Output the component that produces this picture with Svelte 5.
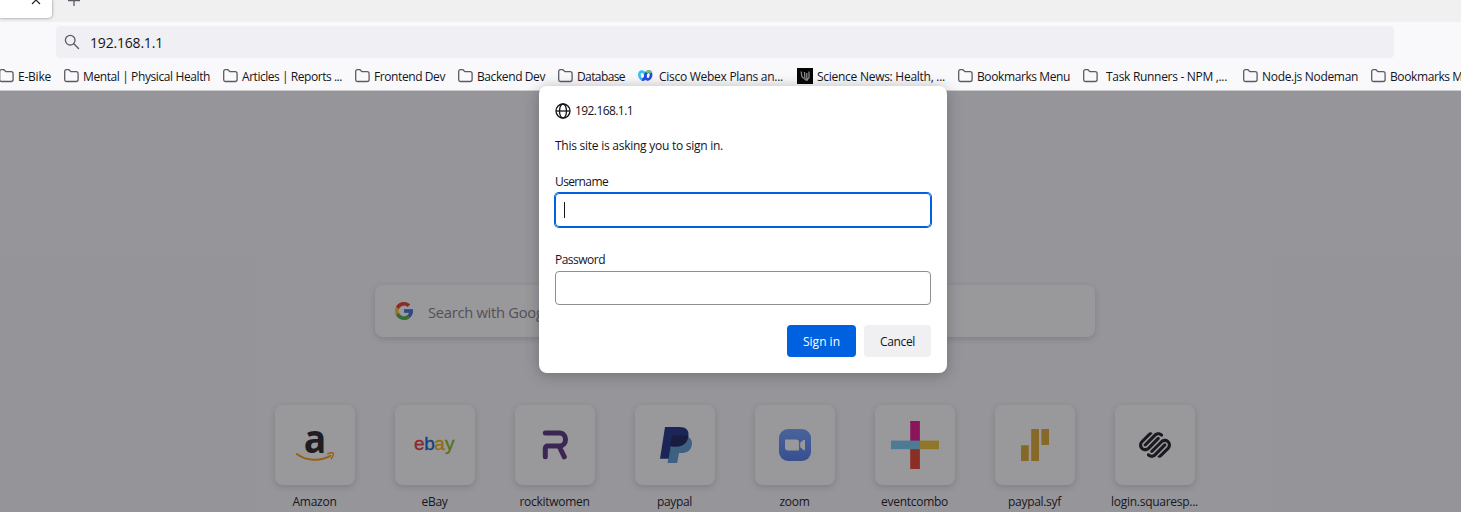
<script>
  const bookmarks = [
    { text: 'E-Bike', w: 33 },
    { text: 'Mental | Physical Health', w: 127 },
    { text: 'Articles | Reports ...', w: 100 },
    { text: 'Frontend Dev', w: 71 },
    { text: 'Backend Dev', w: 68 },
    { text: 'Database', w: 48 },
    { text: 'Cisco Webex Plans an...', w: 124, icon: 'webex', inner: 6 },
    { text: 'Science News: Health, ...', w: 128, icon: 'science', before: 1 },
    { text: 'Bookmarks Menu', w: 93 },
    { text: 'Task Runners - NPM ,...', w: 121, inner: 8 },
    { text: 'Node.js Nodeman', w: 96, before: 3 },
    { text: 'Bookmarks Menu', w: 93 }
  ];

  const sites = [
    { name: 'Amazon', icon: 'amazon', w: 44 },
    { name: 'eBay', icon: 'ebay', w: 26 },
    { name: 'rockitwomen', icon: 'rockit', w: 70 },
    { name: 'paypal', icon: 'paypal', w: 35 },
    { name: 'zoom', icon: 'zoom', w: 30 },
    { name: 'eventcombo', icon: 'event', w: 67 },
    { name: 'paypal.syf', icon: 'syf', w: 53 },
    { name: 'login.squaresp...', icon: 'square', w: 87 }
  ];

  // Tightens tracking so a label occupies the given width.
  function fit(node, width) {
    const natural = node.getBoundingClientRect().width;
    node.style.letterSpacing = (width - natural) / node.textContent.length + 'px';
  }
</script>

{#snippet siteIcon(kind)}
  <svg width="80" height="80" viewBox="0 0 80 80">
    {#if kind === 'amazon'}
      <text x="28.8" y="48" class="amazon-a" textLength="22.5" lengthAdjust="spacingAndGlyphs">a</text>
      <path d="M21.8 49C31 56 45 56.600 55.300 50.800" fill="none" stroke="#ff9900" stroke-width="2" stroke-linecap="round" />
      <path d="M52.800 48.900c2-1 4.500-1.200 5.400-.7.3 1.800-.6 4-2 5.600" fill="none" stroke="#ff9900" stroke-width="1.400" stroke-linecap="round" stroke-linejoin="round" />
    {:else if kind === 'ebay'}
      <text y="44.500" class="ebay"><tspan x="19" fill="#e53238" stroke="#e53238">e</tspan><tspan x="29.300" fill="#0064d2" stroke="#0064d2">b</tspan><tspan x="39.300" fill="#f5af02" stroke="#f5af02">a</tspan><tspan x="49.900" fill="#86b817" stroke="#86b817">y</tspan></text>
    {:else if kind === 'rockit'}
      <path d="M30.300 28H44.500C52.500 28 52.500 41 44.500 41H33Q30.300 41 30.300 44V51.800M44 41L49.300 51.800" fill="none" stroke="#56307c" stroke-width="5" stroke-linecap="round" stroke-linejoin="round" />
    {:else if kind === 'paypal'}
      <path d="M52.300 31.500c4.200 1.800 5.400 5.400 4.400 9.200-1.300 5-4.800 7.300-10.200 7.300H44l-1.800 10h-9.700l2.700-15z" fill="#5a9bd2" />
      <path d="M30 22h14.500c6.500 0 10 3.300 8.800 9.300-1.200 6.700-5.500 10.200-12.500 10.200h-5L33.600 53.800H25z" fill="#1c2f86" />
      <path d="M37.200 30.500h14c1.100 0 1.900.4 2.200.9-1.300 6.700-5.500 10.200-12.500 10.200h-5.700z" fill="#141f5a" />
    {:else if kind === 'zoom'}
      <defs><linearGradient id="zg" x2="0" y2="1"><stop stop-color="#719fff" /><stop offset="1" stop-color="#4f7bea" /></linearGradient></defs>
      <rect x="24" y="24" width="32" height="32" rx="9" fill="url(#zg)" />
      <path d="M30 34.500h11q3 0 3 3v8h-11q-3 0-3-3zM45.200 37.800l3.300-2.700q1.500-1 1.500.5v8.800q0 1.500-1.500.5l-3.300-2.700z" fill="#fff" />
    {:else if kind === 'event'}
      <path fill="#e5118b" d="M35.200 16h9.700v20h-9.700z" />
      <path fill="#e5402a" d="M35.200 44h9.700v20h-9.700z" />
      <path fill="#edc234" d="M45 35.600h19v8.600H45z" />
      <path fill="#76c9f3" d="M16 35.600h29v8.600H16z" />
    {:else if kind === 'syf'}
      <path fill="#dca82e" d="M26 40.300h7.700V56H26zM36.200 24H44v32h-7.800zM46.400 24H54v16h-7.600z" />
    {:else}
      <path transform="translate(24 24) scale(1.3333)" fill="#1b1b1f" d="M22.655 8.719c-1.802-1.801-4.726-1.801-6.564 0l-7.351 7.350c-.45.45-.45 1.200 0 1.650.45.449 1.200.449 1.650 0l7.351-7.351c.899-.899 2.362-.899 3.264 0 .9.9.9 2.364 0 3.264l-7.239 7.239c.9.899 2.362.899 3.263 0l5.589-5.589c1.836-1.838 1.836-4.763.037-6.563zm-2.475 2.437c-.451-.45-1.201-.45-1.650 0l-7.354 7.389c-.9.899-2.361.899-3.262 0-.45-.45-1.200-.45-1.650 0s-.45 1.200 0 1.649c1.801 1.801 4.726 1.801 6.564 0l7.351-7.350c.449-.487.449-1.239.001-1.688zm-2.439-7.350c-1.801-1.801-4.726-1.801-6.564 0l-7.351 7.351c-.45.449-.45 1.199 0 1.649s1.200.45 1.650 0l7.395-7.351c.9-.899 2.371-.899 3.270 0 .451.45 1.201.45 1.650 0 .421-.487.421-1.199-.05-1.649zm-2.475 2.475c-.45-.449-1.200-.449-1.650 0l-7.351 7.351c-.899.9-2.362.9-3.263 0-.899-.9-.9-2.364 0-3.264l7.239-7.239c-.9-.9-2.362-.9-3.263 0L1.390 8.719c-1.801 1.800-1.801 4.725 0 6.563 1.801 1.801 4.725 1.801 6.564 0l7.350-7.351c.451-.488.451-1.238-.038-1.650z" />
    {/if}
  </svg>
{/snippet}

<div class="browser">
  <header>
    <div class="tabs">
      <div class="tab">
        <svg width="12" height="12" viewBox="0 0 12 12"><path d="M2 2l8 8M10 2l-8 8" stroke="#222127" stroke-width="1.200" /></svg>
      </div>
      <svg class="plus" width="14" height="14" viewBox="0 0 14 14"><path d="M7 1v12M1 7.500h12" stroke="#5b5b66" stroke-width="1.300" fill="none" /></svg>
    </div>
    <div class="toolbar">
      <div class="url">
        <svg width="16" height="16" viewBox="0 0 16 16"><circle cx="6.200" cy="6.200" r="4.800" fill="none" stroke="#5b5b66" stroke-width="1.300" /><path d="M9.800 9.800l4.700 4.700" stroke="#5b5b66" stroke-width="1.400" stroke-linecap="round" /></svg>
        <span use:fit={73}>192.168.1.1</span>
      </div>
    </div>
    <nav>
      {#each bookmarks as b}
        <div class="bookmark" style="margin-left:{b.before ?? 0}px">
          {#if b.icon === 'webex'}
            <svg width="15" height="14" viewBox="0 0 15 14"><g fill="none" stroke-width="2.700"><ellipse cx="4.400" cy="6.500" rx="2.900" ry="4" stroke="#38bdf0" transform="rotate(-15 4.400 6.500)" /><ellipse cx="10.200" cy="6.500" rx="2.800" ry="4" stroke="#2748db" transform="rotate(15 10.200 6.500)" /><path d="M8.300 3.500C9.600 1.800 12 1.700 13 4" stroke="#68cc60" /><path d="M4 10.500C6 11 7 9 7.500 6.500" stroke="#244de0" /></g></svg>
          {:else if b.icon === 'science'}
            <svg width="16" height="16" viewBox="0 0 16 16"><path fill="#050505" d="M0 0h16v16H0z" /><path d="M4.200 3.500l.6 5 2 2M7.500 4l.5 7.500 1.800.8V5M12 3.500v6l-2 2.500" fill="none" stroke="#8a8a8a" stroke-width="1.300" /></svg>
          {:else}
            <svg width="15" height="14" viewBox="0 0 15 14"><path d="M2.500.7h2.400l2 1.900h5.200q2 0 2 2v5.900q0 2-2 2H2.700q-2 0-2-2v-8q0-1.800 1.800-1.800z" fill="none" stroke="#5b5b66" stroke-width="1.300" /></svg>
          {/if}
          <span use:fit={b.w} style="margin-left:{b.inner ?? 4}px">{b.text}</span>
        </div>
      {/each}
    </nav>
  </header>

  <main>
    <div class="search">
      <svg width="18" height="18" viewBox="4 4 40 40"><path fill="#fbc02d" d="M43.600 20H24v8h11.300C33.700 32.700 29.200 36 24 36c-6.600 0-12-5.400-12-12s5.400-12 12-12c3 0 5.800 1.200 8 3l5.600-5.600C34 6 29.300 4 24 4 13 4 4 13 4 24s9 20 20 20 20-9 20-20c0-1.300-.1-2.700-.4-4z" /><path fill="#e53935" d="M6.300 14.700l6.600 4.800C14.700 15.100 19 12 24 12c3 0 5.800 1.200 8 3l5.600-5.600C34 6 29.300 4 24 4 16.300 4 9.700 8.300 6.300 14.700z" /><path fill="#4caf50" d="M24 44c5.200 0 9.900-2 13.400-5.200l-6.200-5.200C29.200 35 26.700 36 24 36c-5.200 0-9.600-3.300-11.300-8l-6.500 5C9.500 39.600 16.200 44 24 44z" /><path fill="#3b6fe0" d="M43.600 20H24v8h11.300c-.8 2.200-2.200 4.200-4.100 5.600l6.200 5.200C37 39.200 44 34 44 24c0-1.300-.1-2.700-.4-4z" /></svg>
      <span use:fit={240}>Search with Google or enter address</span>
    </div>
    <div class="sites">
      {#each sites as s}
        <div class="site">
          <div class="tile">{@render siteIcon(s.icon)}</div>
          <span use:fit={s.w}>{s.name}</span>
        </div>
      {/each}
    </div>
    <div class="scrim"></div>
  </main>

  <div class="dialog" role="dialog">
    <div class="host">
      <svg width="16" height="16" viewBox="0 0 16 16"><g fill="none" stroke="#15141a" stroke-width="1.300"><circle cx="8" cy="8" r="7" /><ellipse cx="8" cy="8" rx="3.500" ry="7" /><path d="M1 8h14" /></g></svg>
      <span use:fit={58}>192.168.1.1</span>
    </div>
    <p><span use:fit={168}>This site is asking you to sign in.</span></p>
    <div class="label"><span use:fit={53}>Username</span></div>
    <div class="field focused"><i></i></div>
    <div class="label second"><span use:fit={50}>Password</span></div>
    <div class="field"></div>
    <div class="buttons">
      <button class="primary"><span use:fit={37}>Sign in</span></button>
      <button class="cancel"><span use:fit={35}>Cancel</span></button>
    </div>
  </div>
</div>

<style>
  :global(body) { margin: 0; }
  .browser {
    position: relative;
    width: 1461px;
    height: 512px;
    overflow: hidden;
    display: flex;
    flex-direction: column;
    font: 12px/16px "Open Sans", "Noto Sans", sans-serif;
    color: #15141a;
  }
  span { white-space: nowrap; flex: none; }
  svg { display: block; flex: none; }
  header { height: 91px; box-sizing: border-box; background: #f9f9fb; border-bottom: 1px solid #ccccce; }
  .tabs { height: 22px; background: #f0f0f0; display: flex; align-items: flex-start; }
  .tab {
    width: 52px; height: 18px; box-sizing: border-box; padding-left: 30px;
    background: #fff; border-radius: 0 0 4px 0; box-shadow: 0 0 3px rgba(80, 80, 100, .75);
  }
  .tab svg { margin-top: -6px; }
  .plus { margin: -7px 0 0 15px; }
  .toolbar { padding: 4px 67px 0 56px; }
  .url {
    height: 32px; box-sizing: border-box; background: #f0f0f4; border-radius: 4px;
    display: flex; align-items: center; gap: 10px; padding-left: 8px; font-size: 14px;
  }
  .url span { padding-top: 2px; }
  nav { display: flex; gap: 13px; height: 32px; padding-top: 2px; margin-left: -1px; align-items: center; }
  .bookmark { display: flex; align-items: center; flex: none; }
  .bookmark span { padding-top: 2px; }
  main {
    position: relative; flex: 1; background: #f9f9fb;
    display: flex; flex-direction: column; align-items: center; padding-top: 194px;
  }
  .search {
    width: 720px; height: 52px; box-sizing: border-box; padding-left: 20px; margin-right: -9px;
    display: flex; align-items: center; gap: 15px; font-size: 14.7px; color: #7f7d87;
    background: #fff; border-radius: 8px; box-shadow: 0 2px 6px rgba(58, 57, 68, .2);
  }
  .search span { padding-top: 1px; }
  .sites { display: flex; gap: 40px; margin: 68px -9px 0 0; }
  .site { width: 80px; display: flex; flex-direction: column; align-items: center; gap: 9px; }
  .tile { width: 80px; height: 80px; background: #fff; border-radius: 8px; box-shadow: 0 2px 6px rgba(58, 57, 68, .2); }
  .site span { margin: 0 -10px 0 -11px; }
  .amazon-a { font: bold 39px "Open Sans", sans-serif; fill: #221f24; }
  .ebay { font: 19px "Liberation Sans", sans-serif; stroke-width: .3; }
  .scrim { position: absolute; inset: 0; background: rgba(28, 27, 34, .45); }
  .dialog {
    position: absolute; left: 539px; top: 86px; width: 408px; height: 287px;
    box-sizing: border-box; padding: 16px; background: #fff; border-radius: 8px;
    box-shadow: 0 2px 14px rgba(58, 57, 68, .4);
  }
  .host { display: flex; align-items: center; gap: 4px; height: 17px; }
  p { margin: 19px 0 0; height: 16px; }
  .label { margin-top: 20px; height: 16px; }
  .label.second { margin-top: 25px; }
  .field { height: 34px; margin-top: 3px; box-sizing: border-box; border: 1px solid #8f8f8f; border-radius: 4px; }
  .focused { border-color: #0061e0; box-shadow: 0 0 0 1px #0061e0; padding: 8px; }
  .focused i { display: block; width: 1px; height: 16px; background: #15141a; }
  .buttons { display: flex; justify-content: flex-end; gap: 8px; margin-top: 20px; }
  button {
    display: flex; align-items: center; justify-content: center; height: 32px; padding: 2px 0 0;
    border: 0; border-radius: 4px; font: 500 12px/16px "Open Sans", sans-serif; color: #15141a;
  }
  .primary { width: 69px; background: #0061e0; color: #fff; }
  .cancel { width: 67px; background: #f0f0f2; }
</style>
